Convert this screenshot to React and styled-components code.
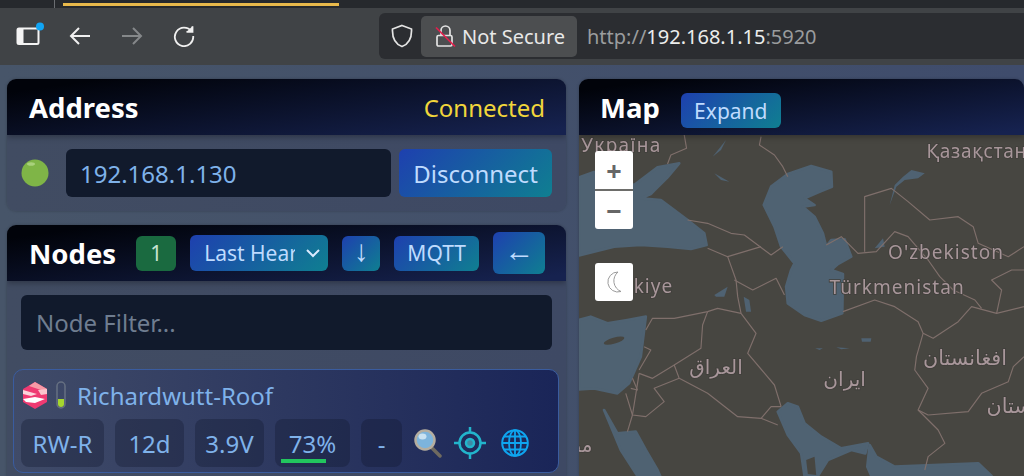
import React from "react";
import styled, { createGlobalStyle } from "styled-components";

const GlobalStyle = createGlobalStyle`
  html, body {
    margin: 0;
    height: 476px;
    overflow: hidden;
    background: #475569;
    font-family: "Noto Sans", "DejaVu Sans", sans-serif;
  }
`;

const TabStrip = styled.div`
  position: relative;
  height: 8px;
  background: #26292d;
  display: flex;
  padding-left: 54px;
`;

const TabDivider = styled.div`
  width: 1px;
  height: 8px;
  background: #6b6e72;
  margin-right: 8px;
`;

const ActiveTabLine = styled.div`
  width: 276px;
  height: 3px;
  margin-top: 3px;
  background: #e8b94b;
`;

const Toolbar = styled.div`
  height: 57px;
  background: #404346;
  display: flex;
  align-items: center;
  padding: 0 0 1px 16px;
  box-sizing: border-box;
`;

const ToolIcon = styled.svg`
  flex: none;
  width: ${(p) => p.$w}px;
  height: ${(p) => p.$h || p.$w}px;
  margin-right: ${(p) => p.$gap || 0}px;
`;

const UrlBar = styled.div`
  flex: 1;
  height: 46px;
  margin-left: 184px;
  background: #2b2d31;
  border-radius: 6px 0 0 6px;
  display: flex;
  align-items: center;
  padding-left: 12px;
`;

const SecurePill = styled.div`
  width: 156px;
  height: 41px;
  margin-left: 8px;
  box-sizing: border-box;
  padding-left: 14px;
  background: #4c4e50;
  border-radius: 5px;
  display: flex;
  align-items: center;
  gap: 6px;
  color: #e8e8e8;
  font-size: 20px;
`;

const UrlText = styled.div`
  margin-left: 10px;
  font-size: 20px;
  color: #9a9c9e;
  white-space: nowrap;
  & > b {
    font-weight: 400;
    color: #eceded;
  }
`;

const Page = styled.div`
  height: 411px;
  overflow: hidden;
  box-sizing: border-box;
  padding: 14px 0 0 7px;
  background: linear-gradient(90deg, #475569, #3f4c6c);
  display: grid;
  grid-template-columns: 559px 445px;
  gap: 13px;
  align-items: start;
`;

const Column = styled.div`
  display: flex;
  flex-direction: column;
  gap: 14px;
`;

const Card = styled.section`
  background: linear-gradient(90deg, #414c62, #3e4964);
  border-radius: 9px 9px 0 0;
  border-bottom-left-radius: ${(p) => (p.$open ? 0 : 9)}px;
  border-bottom-right-radius: ${(p) => (p.$open ? 0 : 9)}px;
  box-shadow: 0 0 3px rgba(0, 0, 0, 0.25);
  overflow: hidden;
`;

const CardHeader = styled.header`
  height: 56px;
  box-sizing: border-box;
  background: linear-gradient(172deg, #01030a 10%, #16224f 95%);
  box-shadow: 0 2px 6px rgba(0, 0, 0, 0.3);
  position: relative;
  display: flex;
  align-items: center;
  padding: 0 21px 0 22px;
`;

const Title = styled.h2`
  margin: 1px 0 0 ${(p) => p.$inset || 0}px;
  color: #fff;
  font-size: 27.5px;
  font-weight: 700;
`;

const Status = styled.span`
  margin-left: auto;
  color: #f1d63b;
  font-size: 24px;
`;

const AddressRow = styled.div`
  height: 76px;
  box-sizing: border-box;
  padding: 14px 14px;
  display: flex;
  align-items: stretch;
  gap: 8px;
`;

const StatusDot = styled.svg`
  width: 28px;
  height: 28px;
  align-self: center;
  margin-right: 9px;
  flex: none;
`;

const AddressField = styled.div`
  flex: 1;
  display: flex;
  align-items: center;
  padding-left: 14px;
  background: #111a2c;
  border-radius: 6px;
  color: #7fb2ea;
  font-size: 24px;
`;

const Button = styled.div`
  display: flex;
  align-items: center;
  justify-content: center;
  flex: none;
  box-sizing: border-box;
  width: ${(p) => p.$w}px;
  height: ${(p) => p.$h}px;
  border-radius: 6px;
  background: linear-gradient(135deg, #1e40af, #0f7f91);
  color: #bfdbfe;
  font-size: ${(p) => p.$size || 21}px;
`;

const ArrowButton = styled(Button)`
  font-family: "Liberation Sans", sans-serif;
  padding-bottom: 5px;
`;

const NodesHeader = styled(CardHeader)`
  padding: 0;
`;

const Count = styled.div`
  width: 40px;
  height: 35px;
  margin: 0 14px 0 20px;
  flex: none;
  display: flex;
  align-items: center;
  justify-content: center;
  border-radius: 6px;
  background: #1a6a40;
  color: #c8e4d2;
  font-size: 21px;
`;

const SortSelect = styled(Button)`
  justify-content: flex-start;
  padding-left: 14px;
  margin-right: 14px;
  gap: 11px;
`;

const SortLabel = styled.span`
  width: 91px;
  overflow: hidden;
  white-space: nowrap;
`;

const HeaderArrow = styled(ArrowButton)`
  margin-right: 14px;
`;

const HeaderButton = styled(Button)`
  margin-right: 14px;
`;

const FilterWrap = styled.div`
  padding: 14px 14px 19px;
`;

const FilterField = styled.div`
  height: 55px;
  display: flex;
  align-items: center;
  padding-left: 15px;
  border-radius: 6px;
  background: #111a2c;
  color: #6f7d90;
  font-size: 24px;
`;

const NodeCard = styled.div`
  margin: 0 7px 4px 6px;
  height: 104px;
  box-sizing: border-box;
  padding: 11px 7px 0;
  border: 1.5px solid #3a5c9f;
  border-radius: 10px;
  background: linear-gradient(90deg, #404b68, #1a2558);
`;

const NodeName = styled.div`
  display: flex;
  align-items: center;
  height: 28px;
  padding-left: 2px;
  color: #7fb2ea;
  font-size: 24px;
`;

const HexLogo = styled.svg`
  flex: none;
  margin-right: 9px;
`;

const BatteryIcon = styled.svg`
  flex: none;
  margin-right: 11px;
`;

const NodeStats = styled.div`
  display: flex;
  align-items: center;
  margin-top: 10px;
  gap: 11px;
`;

const Stat = styled.div`
  position: relative;
  display: flex;
  align-items: center;
  justify-content: center;
  flex: none;
  width: ${(p) => p.$w}px;
  height: 48px;
  border-radius: 8px;
  background: rgba(15, 23, 42, 0.32);
  color: #7fb2ea;
  font-size: 24px;
`;

const LevelBar = styled.div`
  position: absolute;
  left: 6px;
  bottom: 4px;
  height: 4px;
  background: #22c55e;
`;

const ActionIcon = styled.svg`
  flex: none;
  margin-left: ${(p) => p.$offset}px;
`;

const MapCard = styled(Card)`
  height: 397px;
  border-bottom-left-radius: 0;
  border-bottom-right-radius: 0;
`;

const MapHeader = styled(CardHeader)`
  padding-left: 21px;
  gap: 21px;
  z-index: 2;
`;

const ExpandButton = styled(Button)`
  margin-top: 7px;
`;

const MapArea = styled.div`
  position: relative;
  height: 341px;
  background: #474641;
  overflow: hidden;
`;

const MapSvg = styled.svg`
  display: block;
  width: 100%;
  height: 100%;
  filter: blur(0.45px);
`;

const MapLabel = styled.text`
  font-family: "Noto Sans", "DejaVu Sans", sans-serif;
  font-size: ${(p) => p.$size || 57}px;
  fill: #a8969a;
  stroke: #403f3b;
  stroke-width: 5px;
  paint-order: stroke;
  letter-spacing: ${(p) => p.$track || 0}px;
`;

const MapControls = styled.div`
  position: absolute;
  left: 16px;
  top: ${(p) => p.$top}px;
  width: 38px;
  border-radius: 3px;
  background: #fff;
  overflow: hidden;
`;

const ZoomKey = styled.div`
  height: 38px;
  display: flex;
  align-items: center;
  justify-content: center;
  color: #666;
  font-size: 27px;
  font-weight: 700;
  & + & {
    border-top: 2px solid #6d6d6a;
  }
`;

const waters = [
  "15,322 60,306 110,320 180,345 250,292 315,280 280,322 240,362 230,372 200,385 260,390 340,450 390,490 397,525 350,537 280,530 200,525 120,530 60,545 15,556",
  "590,350 640,312 710,288 770,305 772,350 735,365 690,385 720,405 685,410 720,440 745,490 755,530 770,510 810,508 830,560 790,582 770,600 805,612 803,730 740,752 690,735 640,700 635,650 650,600 660,580 620,530 600,470 568,405",
  "15,750 50,740 100,760 160,750 215,740 205,820 200,860 165,940 130,970 60,955 15,958",
  "90,1020 130,1090 185,1085 215,1140 250,1200 258,1218 190,1218 140,1140",
  "610,1025 640,1000 670,1010 690,1060 740,1100 800,1135 880,1120 872,1150 830,1140 760,1170 730,1218 690,1218 680,1150 640,1095",
  "885,1125 905,1160 960,1190 1210,1180 1250,1218 890,1218 878,1190",
];

const lakes = [
  "415,260 455,210 440,240",
  "420,310 465,335 440,330",
  "945,405 960,345 985,320 1010,300 1050,310 1030,325 990,330 965,350",
  "900,535 925,505 930,530",
  "420,675 460,650 450,680 425,680",
  "508,680 525,690 530,725 515,725",
  "860,805 890,805 888,815 862,815",
  "722,835 745,835 735,840",
  "785,832 825,835 800,838",
];

const borders = [
  "330,195 337,235 290,255 280,282",
  "560,200 555,225 600,255 625,290 640,320",
  "340,450 400,460 470,490 510,495 550,525 590,555 625,530",
  "400,535 460,560 510,545 560,530",
  "460,560 485,630 490,680 500,730 545,790 520,850 600,945 620,1010",
  "480,630 535,660 605,625 630,675",
  "755,525 800,500 850,550 905,545 960,485 1000,500 1060,570 1095,620 1135,660 1200,690 1220,715",
  "870,545 870,380 950,355 1000,395 1065,450 1150,440 1195,470 1210,520 1300,560 1347,530",
  "805,725 900,690 960,710 1030,755 1045,790 1075,805 1150,755 1190,710 1265,730 1347,710",
  "1265,730 1280,660 1250,630 1310,600 1347,600",
  "1045,790 1025,860 1020,900 1060,955 1030,1020 1090,1080 1110,1120 1060,1160 1050,1200",
  "1030,1020 1060,1035 1180,1025 1220,970 1300,935 1315,890 1347,860",
  "215,780 235,745 300,745 400,725 430,715 500,730",
  "400,725 385,765 380,835 300,885 235,925 195,910",
  "300,885 315,925 400,970 490,1040 560,1045 590,1010 620,1010",
  "560,1045 610,1065",
  "315,925 240,955 270,995 215,1040 175,1035 155,970",
  "195,910 175,1035 160,1085",
  "210,830 230,840 195,900",
  "175,925 190,960 170,955",
];

const WorldMap = () => (
  <MapSvg viewBox="15 195 1332 1023" preserveAspectRatio="none">
    {waters.map((points) => (
      <polygon key={points} points={points} fill="#4f6272" stroke="#4f6272" strokeWidth="8" strokeLinejoin="round" />
    ))}
    {lakes.map((points) => (
      <polygon key={points} points={points} fill="#4f6272" />
    ))}
    <ellipse cx="120" cy="812" rx="32" ry="9" fill="#474641" transform="rotate(-16 120 812)" />
    <polygon points="695,1170 720,1160 725,1215 700,1212" fill="#474641" />
    {borders.map((points) => (
      <polyline key={points} points={points} fill="none" stroke="#7f6f6b" strokeWidth="3.5" strokeLinejoin="round" />
    ))}
    <MapLabel x="22" y="246" $track={4}>Україна</MapLabel>
    <MapLabel x="1055" y="264" $track={2}>Қазақстан</MapLabel>
    <MapLabel x="940" y="568" $track={3}>O'zbekiston</MapLabel>
    <MapLabel x="765" y="672" $track={3}>Türkmenistan</MapLabel>
    <MapLabel x="297" y="670" textAnchor="end" $track={3}>Türkiye</MapLabel>
    <MapLabel x="425" y="912" textAnchor="middle" $size={60}>العراق</MapLabel>
    <MapLabel x="810" y="948" textAnchor="middle" $size={60}>ایران</MapLabel>
    <MapLabel x="1045" y="885" $size={62}>افغانستان</MapLabel>
    <MapLabel x="1235" y="1030" $size={62}>پاکستان</MapLabel>
    <MapLabel x="55" y="1147" textAnchor="end" $size={60}>مصر</MapLabel>
  </MapSvg>
);

const BrowserIcons = () => (
  <>
    <ToolIcon $w={28} $h={28} $gap={25} viewBox="0 0 28 28">
      <rect x="1.5" y="6.5" width="21" height="15.5" rx="1.5" fill="none" stroke="#f4f4f4" strokeWidth="2" />
      <rect x="1.5" y="6.5" width="6" height="15.5" fill="#f4f4f4" />
      <circle cx="24" cy="4.5" r="4" fill="#10a5f5" />
    </ToolIcon>
    <ToolIcon $w={22} $gap={30} viewBox="0 0 22 22" fill="none" stroke="#f0f0f0" strokeWidth="2">
      <path d="M21 11H2M10 3l-8 8 8 8" />
    </ToolIcon>
    <ToolIcon $w={22} $gap={30} viewBox="0 0 22 22" fill="none" stroke="#85888a" strokeWidth="2">
      <path d="M1 11h19M12 3l8 8-8 8" />
    </ToolIcon>
    <ToolIcon $w={22} viewBox="0 0 22 22" fill="none" stroke="#f0f0f0" strokeWidth="1.8">
      <path d="M18.5 6.5A9.2 9.2 0 1 0 20.2 11" />
      <path d="M13.5 6.8h6V1.2" fill="#f0f0f0" />
    </ToolIcon>
  </>
);

const App = () => (
  <>
    <GlobalStyle />
    <TabStrip>
      <TabDivider />
      <ActiveTabLine />
    </TabStrip>
    <Toolbar>
      <BrowserIcons />
      <UrlBar>
        <ToolIcon $w={22} $h={24} viewBox="0 0 22 24" fill="none" stroke="#e4e4e4" strokeWidth="1.7">
          <path d="M11 1.5 20.5 5c.4 8-1.800 14.500-9.500 17.500C3.300 19.500 1.100 13 1.500 5z" />
        </ToolIcon>
        <SecurePill>
          <ToolIcon $w={21} $h={24} viewBox="0 0 21 24">
            <path d="M6 11V6.500a4.500 4.500 0 0 1 9 0V11" fill="none" stroke="#e2e2e2" strokeWidth="1.7" />
            <rect x="2" y="11.500" width="15" height="10.500" rx="1.500" fill="none" stroke="#e2e2e2" strokeWidth="1.7" />
            <path d="M1 3.500 20 22.500" stroke="#e3204e" strokeWidth="1.700" />
          </ToolIcon>
          Not Secure
        </SecurePill>
        <UrlText>
          http://<b>192.168.1.15</b>:5920
        </UrlText>
      </UrlBar>
    </Toolbar>
    <Page>
      <Column>
        <Card>
          <CardHeader>
            <Title>Address</Title>
            <Status>Connected</Status>
          </CardHeader>
          <AddressRow>
            <StatusDot viewBox="0 0 28 28">
              <circle cx="14" cy="14" r="13.500" fill="#7fb547" />
              <ellipse cx="10" cy="5" rx="4" ry="1.800" fill="#a9d17c" />
            </StatusDot>
            <AddressField>192.168.1.130</AddressField>
            <Button $w={153} $h={48} $size={24}>Disconnect</Button>
          </AddressRow>
        </Card>
        <Card $open>
          <NodesHeader>
            <Title $inset={22}>Nodes</Title>
            <Count>1</Count>
            <SortSelect $w={138} $h={36}>
              <SortLabel>Last Heard</SortLabel>
              <svg width="14" height="10" viewBox="0 0 14 10" fill="none" stroke="#dbeafe" strokeWidth="2">
                <path d="M1 2l6 6 6-6" />
              </svg>
            </SortSelect>
            <HeaderArrow $w={38} $h={35} $size={30}>↓</HeaderArrow>
            <HeaderButton $w={85} $h={35}>MQTT</HeaderButton>
            <ArrowButton $w={52} $h={42} $size={30}>←</ArrowButton>
          </NodesHeader>
          <FilterWrap>
            <FilterField>Node Filter...</FilterField>
          </FilterWrap>
          <NodeCard>
            <NodeName>
              <HexLogo width="24" height="27" viewBox="0 0 24 27">
                <polygon points="12,0 24,7 24,20 12,27 0,20 0,7" fill="#ef3a72" />
                <polygon points="12,0 24,7 21,9 6,4" fill="#f79aa6" />
                <polygon points="15,8 24,7 24,12 18,13" fill="#fbc4cc" />
                <polygon points="0,8 14,12 8,14 0,12" fill="#fbd4dc" />
                <polygon points="0,17 12,15 22,17 12,21 3,20" fill="#ffffff" />
              </HexLogo>
              <BatteryIcon width="10" height="28" viewBox="0 0 10 28">
                <rect x="1" y="1" width="8" height="26" rx="4" fill="none" stroke="#667082" strokeWidth="1.500" />
                <path d="M2 18h6v5a3 3 0 0 1-6 0z" fill="#a5d62e" />
              </BatteryIcon>
              Richardwutt-Roof
            </NodeName>
            <NodeStats>
              <Stat $w={83}>RW-R</Stat>
              <Stat $w={69}>12d</Stat>
              <Stat $w={69}>3.9V</Stat>
              <Stat $w={75}>
                73%
                <LevelBar style={{ width: `${0.73 * 61}px` }} />
              </Stat>
              <Stat $w={41}>-</Stat>
              <ActionIcon $offset={1} width="28" height="30" viewBox="0 0 28 30">
                <path d="M17 19l9 9" stroke="#6f6a60" strokeWidth="3.500" strokeLinecap="round" />
                <circle cx="11" cy="12" r="9.500" fill="#7db4dc" stroke="#b5aea0" strokeWidth="2.500" />
                <ellipse cx="8.500" cy="8.500" rx="4" ry="3" fill="#c9e2f2" />
              </ActionIcon>
              <ActionIcon $offset={1} width="32" height="32" viewBox="0 0 32 32" fill="none" stroke="#22b5cc" strokeWidth="2.500">
                <circle cx="16" cy="16" r="10.500" />
                <circle cx="16" cy="16" r="4" fill="#3f8aa5" />
                <path d="M16 0v6M16 26v6M0 16h6M26 16h6" />
              </ActionIcon>
              <ActionIcon $offset={4} width="28" height="28" viewBox="0 0 28 28" fill="none" stroke="#0ea5f0" strokeWidth="1.800">
                <circle cx="14" cy="14" r="12.800" strokeWidth="2" />
                <ellipse cx="14" cy="14" rx="6" ry="12.800" />
                <path d="M14 1v26M1 14h26M3 7.500h22M3 20.500h22" />
              </ActionIcon>
            </NodeStats>
          </NodeCard>
        </Card>
      </Column>
      <MapCard $open>
        <MapHeader>
          <Title>Map</Title>
          <ExpandButton $w={100} $h={35}>Expand</ExpandButton>
        </MapHeader>
        <MapArea>
          <WorldMap />
          <MapControls $top={16}>
            <ZoomKey>+</ZoomKey>
            <ZoomKey>−</ZoomKey>
          </MapControls>
          <MapControls $top={128}>
            <ZoomKey>
              <svg width="16" height="22" viewBox="0 0 16 22" fill="none" stroke="#9a9a9a" strokeWidth="1">
                <path d="M12 1A10 10 0 1 0 15 20.500 11.500 11.500 0 0 1 12 1z" />
              </svg>
            </ZoomKey>
          </MapControls>
        </MapArea>
      </MapCard>
    </Page>
  </>
);

export default App;
